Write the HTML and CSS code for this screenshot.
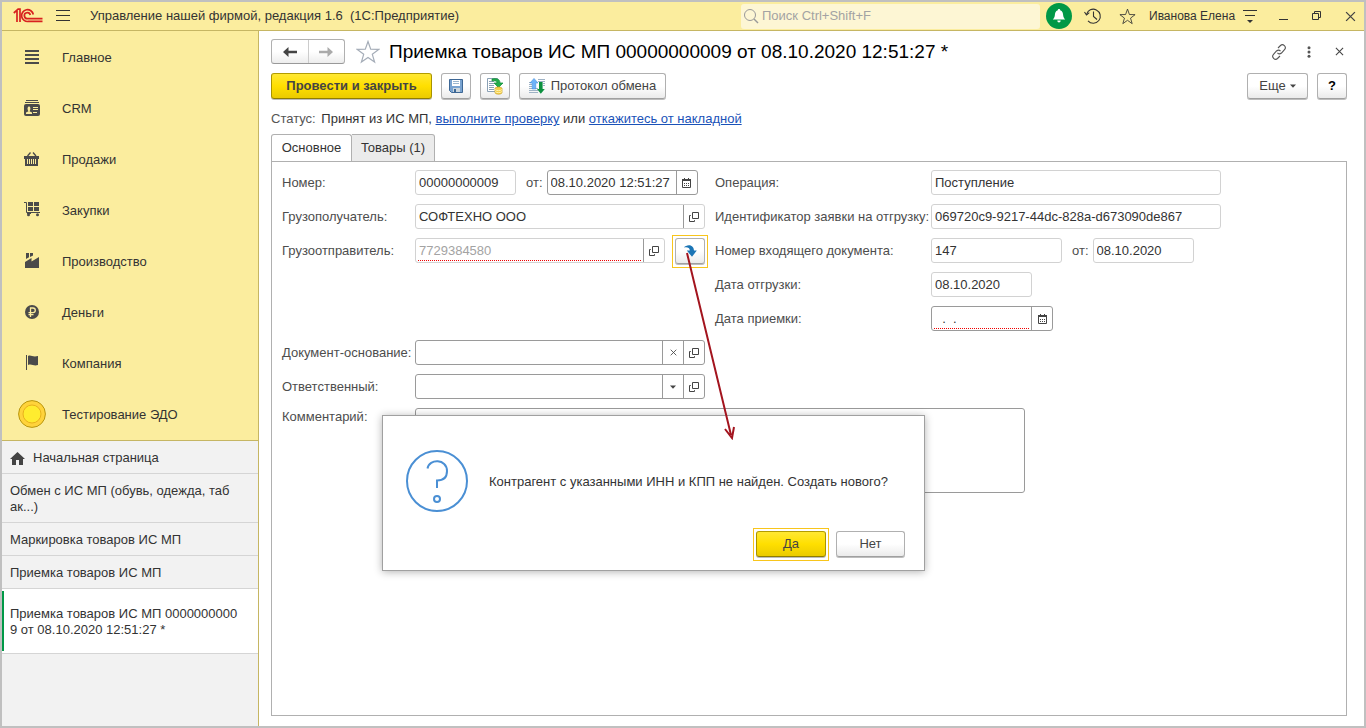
FILE: index.html
```html
<!DOCTYPE html>
<html lang="ru">
<head>
<meta charset="utf-8">
<title>Приемка товаров ИС МП</title>
<link rel="stylesheet" href="styles.css">
</head>
<body>
<svg class="sprite" aria-hidden="true">
  <symbol id="i-open" viewBox="0 0 10 10"><path d="M3.5 .5h6v6h-6z M1.8 3.5H.5v6h5V8.2" fill="none" stroke="#444"/></symbol>
  <symbol id="i-cal" viewBox="0 0 9 10"><path d="M.5 1.5h8v8h-8z" fill="#fff" stroke="#444"/><path d="M0 1h9v2H0z M2 0h1v1H2z M6 0h1v1H6z M2 5h1v1H2z M4 5h1v1H4z M6 5h1v1H6z M2 7h1v1H2z M4 7h1v1H4z M6 7h1v1H6z" fill="#444"/></symbol>
  <symbol id="i-x" viewBox="0 0 10 10"><path d="M1 1l8 8M9 1l-8 8" fill="none" stroke="#444" stroke-width="1.2"/></symbol>
  <symbol id="i-down" viewBox="0 0 6 4"><path d="M0 .5h6L3 3.7z" fill="#444"/></symbol>
  <symbol id="i-star" viewBox="0 0 24 24"><path d="M12 1.5l2.7 7.7 8 .2-6.4 4.9 2.3 7.8L12 17.4l-6.6 4.7 2.3-7.8L1.3 9.4l8-.2z" fill="none" stroke="currentColor" stroke-width="1.2"/></symbol>
</svg>
<div class="window">
  <header class="topbar">
    <svg class="logo" width="30" height="16" viewBox="0 0 30 16"><g fill="none" stroke="#d8201f"><path d="M.8 5L4 2.2V14M4.500 1.200H7V14" stroke-width="1.700"/><path d="M20.300 6.500A5.900 5.900 0 1 0 15.500 13.400H29.500" stroke-width="1.700"/><path d="M17.300 7A3 3 0 1 0 15 10.600H29.500" stroke-width="1.700"/></g></svg>
    <button class="plain burger" aria-label="Меню"><svg width="14" height="12" viewBox="0 0 14 12"><path d="M0 .5h14M0 5.500h14M0 10.500h14" stroke="#333"/></svg></button>
    <span class="app-title">Управление нашей фирмой, редакция 1.6 &nbsp;(1С:Предприятие)</span>
    <label class="search">
      <svg width="16" height="16" viewBox="0 0 16 16"><circle cx="7" cy="7" r="5.500" fill="none" stroke="#999"/><path d="M11 11l4 4" stroke="#999" stroke-width="1.500"/></svg>
      <input type="search" placeholder="Поиск Ctrl+Shift+F" aria-label="Поиск">
    </label>
    <button class="plain bell" aria-label="Уведомления"><svg width="14" height="16" viewBox="0 0 14 16"><path d="M7 1c1 0 1.200.7 1.200 1.200C10.500 3 11 5 11.200 7.500c.2 2 1 2.800 2 4H.8c1-1.200 1.800-2 2-4C3 5 3.500 3 5.800 2.200 5.800 1.700 6 1 7 1z M5.300 12.500h3.400c0 2.500-3.400 2.500-3.400 0z" fill="#fff"/></svg></button>
    <button class="plain history" aria-label="История"><svg width="18" height="18" viewBox="0 0 18 18"><g fill="none" stroke="#333" stroke-width="1.100"><path d="M2.500 7.500A7 7 0 1 1 4 13.800"/><path d="M.5 5l2 3L5.300 5.700M9.500 4.500v5l3.500 3"/></g></svg></button>
    <button class="plain favs" aria-label="Избранное"><svg width="17" height="17"><use href="#i-star"/></svg></button>
    <a class="user" href="#">Иванова Елена</a>
    <button class="plain options" aria-label="Настройки"><svg width="14" height="13" viewBox="0 0 14 13"><path d="M0 .5h14M2 5.500h10" stroke="#333"/><path d="M4 10h6l-3 3z" fill="#333"/></svg></button>
    <button class="plain wmin" aria-label="Свернуть"><svg width="9" height="12" viewBox="0 0 9 12"><path d="M0 9.500h9" stroke="#333"/></svg></button>
    <button class="plain wmax" aria-label="Развернуть"><svg width="10" height="10" viewBox="0 0 10 10"><path d="M.5 2.500h6v6h-6z M2.500 2.500v-2h6v6h-2" fill="none" stroke="#333"/></svg></button>
    <button class="plain wclose" aria-label="Закрыть"><svg width="11" height="11"><use href="#i-x"/></svg></button>
  </header>
  <div class="body">
    <aside class="side">
      <nav class="sections">
        <a href="#"><svg width="28" height="28" viewBox="0 0 28 28"><path d="M7 8h14M7 12h14M7 16h14M7 20h14" stroke="#4a4a4a" stroke-width="2"/></svg><span>Главное</span></a>
        <a href="#"><svg width="28" height="28" viewBox="0 0 28 28"><path d="M8 6.500h12M7 8.500h14" stroke="#4a4a4a"/><path d="M8 10h12a2 2 0 0 1 2 2v8a2 2 0 0 1-2 2H8a2 2 0 0 1-2-2v-8a2 2 0 0 1 2-2z" fill="#4a4a4a"/><path d="M8 20v-1.500l2.500-1.300c-1.500-2-1-4.700.5-4.700s2 2.700.5 4.700l2.500 1.300V20z M15 13h5v1h-5z M15 15h5v1h-5z M15 18h4v1h-4z" fill="#fbed9e"/></svg><span>CRM</span></a>
        <a href="#"><svg width="28" height="28" viewBox="0 0 28 28"><path d="M6 11h15v3h-1v7H7v-7H6z" fill="#4a4a4a"/><path d="M9.500 11l3-3.500M18 11l-3-3.500" stroke="#4a4a4a" stroke-width="1.300"/><path d="M9.500 14v5M11.500 14v5M13.500 14v5M15.500 14v5M17.500 14v5" stroke="#fbed9e"/></svg><span>Продажи</span></a>
        <a href="#"><svg width="28" height="28" viewBox="0 0 28 28"><path d="M6 6.500h2.500v10H22" fill="none" stroke="#4a4a4a"/><path d="M10 6h5v4h-5z M16 6h5v4h-5z M10 11h5v4h-5z M16 11h5v4h-5z M9 17h4v1H9z" fill="#4a4a4a"/><circle cx="10.500" cy="18.700" r="1.500" fill="#4a4a4a"/><circle cx="19.500" cy="18.700" r="1.500" fill="#4a4a4a"/></svg><span>Закупки</span></a>
        <a href="#"><svg width="28" height="28" viewBox="0 0 28 28"><path d="M7 21v-6l6.500-4v3.500L21 10v11z M8 6h3v4.300L8 12z M12 6h3v2.500l-3 1.500z" fill="#4a4a4a"/></svg><span>Производство</span></a>
        <a href="#"><svg width="28" height="28" viewBox="0 0 28 28"><circle cx="14" cy="14" r="7" fill="#4a4a4a"/><path d="M12.500 19V10h2.500a2.300 2.300 0 0 1 0 4.600h-4.500M10.500 16.600h5" fill="none" stroke="#fbed9e" stroke-width="1.300"/></svg><span>Деньги</span></a>
        <a href="#"><svg width="28" height="28" viewBox="0 0 28 28"><path d="M8 6h1v15H8z M10 7c3-1.500 4.500 1.500 10 0v9c-4.500 1.500-6-1.500-10 0z" fill="#4a4a4a"/></svg><span>Компания</span></a>
        <a href="#"><svg width="28" height="28" viewBox="0 0 28 28"><circle cx="14" cy="14" r="13.400" fill="#ffd33b" stroke="#b8960f"/><circle cx="14" cy="14" r="9" fill="#ffec2f" stroke="#e9b11c"/></svg><span>Тестирование ЭДО</span></a>
      </nav>
      <nav class="pages">
        <a href="#" class="home"><svg width="15" height="13" viewBox="0 0 15 13"><path d="M7.500 0L15 7h-2v6H9V8H6v5H2V7H0z" fill="#444"/></svg>Начальная страница</a>
        <a href="#">Обмен с ИС МП (обувь, одежда, таб<br>ак...)</a>
        <a href="#">Маркировка товаров ИС МП</a>
        <a href="#">Приемка товаров ИС МП</a>
        <a href="#" class="current">Приемка товаров ИС МП 0000000000<br>9 от 08.10.2020 12:51:27 *</a>
      </nav>
    </aside>
    <main class="main">
      <div class="title-row">
        <div class="history-nav">
          <button aria-label="Назад"><svg width="14" height="10" viewBox="0 0 14 10"><path d="M0 5l5.500-5v3.700H14v2.600H5.500V10z" fill="#444"/></svg></button>
          <button aria-label="Вперед"><svg width="14" height="10" viewBox="0 0 14 10"><path d="M14 5L8.500 0v3.700H0v2.600h8.500V10z" fill="#aaa"/></svg></button>
        </div>
        <button class="plain fav" aria-label="В избранное"><svg width="24" height="24"><use href="#i-star"/></svg></button>
        <h1>Приемка товаров ИС МП 00000000009 от 08.10.2020 12:51:27 *</h1>
        <div class="title-tools">
          <button class="plain" aria-label="Ссылка"><svg width="16" height="16" viewBox="0 0 16 16"><g fill="none" stroke="#555" stroke-width="1.100"><path d="M7 4l2.500-2.500c2.500-2.300 6.500 1.500 4 4.200L10.500 9C9 10.200 7.500 10 6.500 8.800"/><path d="M9 12l-2.500 2.500c-2.500 2.300-6.500-1.500-4-4.200L5.500 7C7 5.800 8.500 6 9.500 7.200"/></g></svg></button>
          <button class="plain dots" aria-label="Действия"><svg width="4" height="12" viewBox="0 0 4 12"><g fill="#555"><circle cx="2" cy="1.700" r="1.500"/><circle cx="2" cy="6" r="1.500"/><circle cx="2" cy="10.300" r="1.500"/></g></svg></button>
          <button class="plain" aria-label="Закрыть форму"><svg width="9" height="9"><use href="#i-x"/></svg></button>
        </div>
      </div>
      <div class="toolbar">
        <button class="btn primary">Провести и закрыть</button>
        <button class="btn icon" aria-label="Записать"><svg width="14" height="14" viewBox="0 0 14 14"><path d="M.5.5h13v13h-11l-2-2z" fill="#79a3d0" stroke="#3d6795"/><path d="M3 1h8v6H3z" fill="#fff"/><path d="M4 2.500h6M4 4.500h6" stroke="#9cb7cf"/><path d="M4 9h7v4H4z" fill="#ccd6dd"/><path d="M5 10h2v3H5z" fill="#3d6795"/></svg></button>
        <button class="btn icon" aria-label="Провести"><svg width="17" height="17" viewBox="0 0 17 17"><path d="M.5.500h10v13H.5z" fill="#fff" stroke="#8ba1b5"/><path d="M2 3.500h5M2 5.500h5M2 7.500h5M2 9.500h5M2 11.500h5" stroke="#8ba1b5"/><path d="M5 1c5-1 8 0 8 4h3l-4.500 4.500L7 5h3c0-2-2-2.500-5-2z" fill="#23ad4a" stroke="#0d8b35" stroke-width=".7"/><path d="M8 10.500c0-2 7-2 7 0v4c0 2.200-7 2.200-7 0z" fill="#f7d14a" stroke="#c99c1c" stroke-width=".7"/><path d="M8 11.500c1 1.500 6 1.500 7 0M8 13.500c1 1.500 6 1.500 7 0" fill="none" stroke="#fff3ac"/></svg></button>
        <button class="btn exchange"><svg width="16" height="16" viewBox="0 0 16 16"><path d="M0 4.500h3M0 6.500h3M0 8.500h3M0 10.500h9M0 12.500h9M0 14.500h9M9 1.500h7M9 3.500h7M14 5.500h2M14 7.500h2" stroke="#9eb2c5"/><path d="M5 .4L9 5H6.800v6H3.200V5H1z" fill="#6eb3fa" stroke="#3c86d8" stroke-width=".5"/><path d="M11.800 15.800L8 11h2V4h3.600v7h2.200z" fill="#0d9140"/></svg>Протокол обмена</button>
        <button class="btn more">Еще <svg width="6" height="4"><use href="#i-down"/></svg></button>
        <button class="btn help">?</button>
      </div>
      <p class="status"><span class="muted">Статус:</span> Принят из ИС МП, <a href="#">выполните проверку</a> или <a href="#">откажитесь от накладной</a></p>
      <div class="tabs" role="tablist">
        <button role="tab" aria-selected="true">Основное</button>
        <button role="tab" aria-selected="false">Товары (1)</button>
      </div>
      <form class="panel">
        <label for="num">Номер:</label>
        <div class="cell">
          <div class="field w101"><input id="num" value="00000000009" readonly></div>
          <label class="from" for="numdate">от:</label>
          <div class="field edit w151"><input id="numdate" value="08.10.2020 12:51:27"><button type="button" aria-label="Календарь"><svg width="9" height="10"><use href="#i-cal"/></svg></button></div>
        </div>
        <label for="op">Операция:</label>
        <div class="cell"><div class="field w290"><input id="op" value="Поступление" readonly></div></div>

        <label for="recv">Грузополучатель:</label>
        <div class="cell"><div class="field w290 divided"><input id="recv" value="СОФТЕХНО ООО" readonly><button type="button" aria-label="Открыть"><svg width="10" height="10"><use href="#i-open"/></svg></button></div></div>
        <label for="ident">Идентификатор заявки на отгрузку:</label>
        <div class="cell"><div class="field w290"><input id="ident" value="069720c9-9217-44dc-828a-d673090de867" readonly></div></div>

        <label for="sender">Грузоотправитель:</label>
        <div class="cell">
          <div class="field w250 divided"><input id="sender" class="required" placeholder="7729384580"><button type="button" aria-label="Открыть"><svg width="10" height="10"><use href="#i-open"/></svg></button></div>
          <button type="button" class="btn icon create focus" aria-label="Создать контрагента"><svg width="14" height="14" viewBox="0 0 14 14"><path d="M1 3.500C3 .5 10.500-.5 11 6.500h2.800L9 12.800 3.800 6.500h3C6.800 3.500 4 2.800 1 3.500z" fill="#1b75b5"/></svg></button>
        </div>
        <label for="inc">Номер входящего документа:</label>
        <div class="cell">
          <div class="field w131"><input id="inc" value="147" readonly></div>
          <label class="from" for="incdate">от:</label>
          <div class="field w101"><input id="incdate" value="08.10.2020" readonly></div>
        </div>

        <label class="right" for="ship">Дата отгрузки:</label>
        <div class="cell"><div class="field w101"><input id="ship" value="08.10.2020" readonly></div></div>

        <label class="right" for="acc">Дата приемки:</label>
        <div class="cell"><div class="field edit w122"><input id="acc" class="required" value="  .  ."><button type="button" aria-label="Календарь"><svg width="9" height="10"><use href="#i-cal"/></svg></button></div></div>

        <label for="base">Документ-основание:</label>
        <div class="cell wide"><div class="field edit w290"><input id="base"><button type="button" aria-label="Очистить"><svg width="7" height="7"><use href="#i-x"/></svg></button><button type="button" aria-label="Открыть"><svg width="10" height="10"><use href="#i-open"/></svg></button></div></div>

        <label for="resp">Ответственный:</label>
        <div class="cell wide"><div class="field edit w290"><input id="resp"><button type="button" aria-label="Выбрать"><svg width="6" height="4"><use href="#i-down"/></svg></button><button type="button" aria-label="Открыть"><svg width="10" height="10"><use href="#i-open"/></svg></button></div></div>

        <label class="top" for="comment">Комментарий:</label>
        <textarea id="comment" class="wide"></textarea>
      </form>
      <section class="dialog" role="dialog" aria-label="Вопрос">
        <div class="message">
          <svg width="62" height="62" viewBox="0 0 62 62"><g fill="none" stroke="#4a8fd4" stroke-width="2"><circle cx="31" cy="31" r="30"/><path d="M21.500 18.500C23 8.500 41 8.500 41 21c0 7-4.500 9.500-10 9.500V38"/><circle cx="31" cy="49" r="3"/></g></svg>
          <p>Контрагент с указанными ИНН и КПП не найден. Создать нового?</p>
        </div>
        <div class="answers">
          <button class="btn primary focus">Да</button>
          <button class="btn">Нет</button>
        </div>
      </section>
      <svg class="pointer" width="60" height="190" viewBox="0 0 60 190"><path d="M7 3L51 185M45 179l7 9 2-11" fill="none" stroke="#a3141e" stroke-width="2"/></svg>
    </main>
  </div>
</div>
</body>
</html>
```
FILE: styles.css
```css
* { box-sizing: border-box; }
body {
  margin: 0;
  font: 13px/16px "Liberation Sans", Arial, sans-serif;
  color: #333;
}
button, input, textarea { font: inherit; color: inherit; margin: 0; }
a { color: inherit; text-decoration: none; }
svg { display: block; flex: none; }
.sprite { display: none; }
.window {
  min-height: 100vh;
  display: flex;
  flex-direction: column;
  border: 2px solid #c0c0c0;
  background: #fff;
}
.plain {
  border: 0;
  padding: 0;
  background: none;
  display: flex;
  align-items: center;
  justify-content: center;
}

.topbar {
  display: flex;
  align-items: center;
  height: 29px;
  padding: 0 8px 0 11px;
  background: #fbed9e;
  border-bottom: 1px solid #c6b663;
}
.burger { margin: 0 20px 0 13px; }
.app-title { flex: 1; white-space: nowrap; }
.search {
  display: flex;
  align-items: center;
  gap: 3px;
  width: 299px;
  height: 25px;
  padding: 0 2px;
  border-radius: 3px;
  background: #fdf6d4;
}
.search input {
  flex: 1;
  min-width: 0;
  border: 0;
  padding: 0;
  background: none;
}
.search input::placeholder { color: #a3a3a3; opacity: 1; }
.bell {
  width: 26px;
  height: 26px;
  margin-left: 6px;
  border-radius: 50%;
  background: #009846;
}
.history { margin-left: 12px; }
.favs { margin: 0 13px 0 17px; }
.user { width: 81px; font-size: 12px; white-space: nowrap; }
.options { margin-left: 13px; }
.wmin { margin-left: 22px; }
.wmax { margin-left: 24px; }
.wclose { margin-left: 23px; }

.body { flex: 1; display: flex; }
.side {
  width: 257px;
  flex: none;
  background: #f2f2f2;
  border-right: 1px solid #c6b663;
}
.sections {
  padding-bottom: 1px;
  background: #fbed9e;
  border-bottom: 1px solid #c6b663;
}
.sections a {
  display: flex;
  align-items: center;
  gap: 16px;
  height: 51px;
  padding: 1px 16px 0;
}
.sections span { padding-top: 2px; }
.pages a {
  display: block;
  padding: 9px 8px 7px;
  border-bottom: 1px solid #d5d5d5;
}
.pages .home { display: flex; align-items: center; gap: 8px; }
.pages .current {
  padding: 17px 8px 15px;
  background: linear-gradient(#009846, #009846) 0 2px / 2px 60px no-repeat #fff;
}

.main {
  position: relative;
  flex: 1;
  min-width: 0;
  display: flex;
  flex-direction: column;
  padding: 8px 17px 10px 12px;
}
.title-row { display: flex; align-items: center; height: 25px; }
.history-nav {
  display: flex;
  width: 74px;
  height: 25px;
  border: 1px solid #b0b0b0;
  border-bottom-color: #999;
  border-radius: 3px;
  background: linear-gradient(#fff 50%, #ededed);
}
.history-nav button {
  flex: 1;
  display: grid;
  place-items: center;
  border: 0;
  padding: 0;
  background: none;
}
.history-nav button + button { border-left: 1px solid #ccc; }
.fav { margin: 0 9px 0 11px; color: #a5adb8; }
h1 {
  flex: 1;
  margin: 0;
  font-size: 19px;
  line-height: 24px;
  font-weight: 400;
  color: #000;
  white-space: nowrap;
}
.title-tools { display: flex; align-items: center; gap: 20px; padding-right: 3px; }
.dots { margin-right: 4px; }

.btn {
  position: relative;
  display: flex;
  align-items: center;
  justify-content: center;
  height: 26px;
  padding: 0 13px;
  border: 1px solid #b0b0b0;
  border-bottom-color: #a0a0a0;
  border-radius: 3px;
  background: linear-gradient(#fff 50%, #ebebeb);
  box-shadow: 0 1px 0 #bdbdbd;
  color: #444;
  white-space: nowrap;
}
.primary {
  border-color: #b29c00 #a89300 #8f7d00;
  background: linear-gradient(#ffe833, #ffdf00 50%, #ebcb00);
}
.icon { width: 30px; padding: 0; }
.focus::after {
  content: "";
  position: absolute;
  inset: -4px -4px -5px;
  border: 1px solid #f8c51c;
}
.toolbar { display: flex; gap: 9px; height: 27px; margin-top: 9px; }
.toolbar .primary { width: 161px; font-weight: 700; }
.exchange { width: 147px; gap: 6px; padding: 0; }
.more { width: 61px; gap: 4px; margin-left: auto; }
.help { width: 30px; padding: 0; font-weight: 700; color: #000; }

.status { margin: 11px 0 7px; }
.status a { color: #1a52b8; text-decoration: underline; }
.muted { margin-right: 2px; color: #555; }

.tabs { display: flex; height: 28px; margin-bottom: -1px; }
.tabs button {
  width: 83px;
  padding: 0;
  border: 1px solid #b0b0b0;
  border-left: 0;
  border-radius: 0 3px 0 0;
  background: #ebebeb;
}
.tabs button[aria-selected="true"] {
  width: 81px;
  border-left: 1px solid #b0b0b0;
  border-bottom-color: #fff;
  border-radius: 3px 3px 0 0;
  background: #fff;
}
.panel {
  flex: 1;
  display: grid;
  grid-template-columns: 133px 300px 216px minmax(0, 1fr);
  grid-auto-rows: 25px;
  row-gap: 9px;
  align-content: start;
  align-items: center;
  padding: 8px 10px;
  border: 1px solid #b0b0b0;
}
.panel label { color: #4d4d4d; white-space: nowrap; }
.panel .right { grid-column: 3; }
.panel .top { align-self: start; padding-top: 1px; }
.panel .wide { grid-column: 2 / -1; }
.cell { display: flex; align-items: center; }
.cell .from { margin: 0 4px 0 10px; }
.field {
  display: flex;
  height: 25px;
  border: 1px solid #d2d2d2;
  border-radius: 3px;
  background: #fff;
}
.edit { border-color: #9a9a9a; }
.field input {
  flex: 1;
  min-width: 0;
  height: 23px;
  border: 0;
  padding: 0 3px;
  background: none;
  outline: 0;
  white-space: pre;
}
.field input::placeholder { color: #a3a3a3; opacity: 1; }
.field .required {
  height: 22px;
  margin: 0 2px;
  padding: 0 1px;
  background: repeating-linear-gradient(90deg, #f00000 0 1px, transparent 1px 2px) left bottom / 100% 1px no-repeat;
}
.field button {
  width: 21px;
  display: grid;
  place-items: center;
  padding: 0;
  border: 0;
  border-left: 1px solid #9a9a9a;
  background: none;
}
.w101 { width: 101px; }
.w122 { width: 122px; }
.w131 { width: 131px; }
.w151 { width: 151px; }
.w250 { width: 250px; }
.w290 { width: 290px; }
.create { margin-left: 10px; }
textarea {
  align-self: start;
  width: 610px;
  max-width: 100%;
  height: 85px;
  border: 1px solid #9a9a9a;
  border-radius: 3px;
  background: #fff;
  resize: none;
}

.dialog {
  position: absolute;
  left: 123px;
  top: 384px;
  width: 543px;
  padding: 34px 19px 13px 23px;
  border: 1px solid #a0a0a0;
  background: #fff;
  box-shadow: 0 1px 8px rgba(0, 0, 0, .3);
}
.message { display: flex; align-items: center; gap: 21px; }
.message p { margin: 0; padding-top: 2px; white-space: nowrap; }
.answers { display: flex; justify-content: flex-end; gap: 10px; margin-top: 19px; }
.answers .btn { width: 69px; }
.answers .primary { width: 70px; }
.pointer { position: absolute; left: 421px; top: 219px; }
```
